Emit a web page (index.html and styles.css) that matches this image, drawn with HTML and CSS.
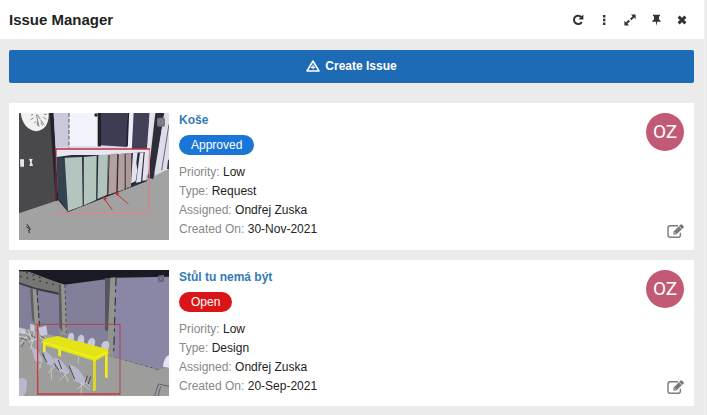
FILE: index.html
```
<!DOCTYPE html>
<html lang="en">
  <head>
    <meta charset="UTF-8" />
    <meta name="viewport" content="width=device-width, initial-scale=1.0" />
    <title>Issue Manager</title>
    <link rel="stylesheet" href="styles.css">
  </head>

  <body>
    <div class="panel">
      <header class="panel-header">
        <h1>Issue Manager</h1>
        <div class="tools">
          <button type="button" aria-label="Refresh">
            <svg viewBox="0 0 12 12"><path d="M9.6 3.4A4.2 4.2 0 1 0 9.8 8" fill="none" stroke="#333" stroke-width="2" /><path d="M11.4.6v5H6.4z" /></svg>
          </button>
          <button type="button" aria-label="More">
            <svg viewBox="0 0 12 12"><path d="M5 1h2.4v2.4H5zM5 4.8h2.4v2.4H5zM5 8.6h2.4V11H5z" /></svg>
          </button>
          <button type="button" aria-label="Expand">
            <svg viewBox="0 0 12 12"><path d="M7 .6h4.6v4.6L10 3.6 7.4 6.2 6 4.8l2.6-2.6zM5 11.4H.4V6.8L2 8.4l2.6-2.6L6 7.2 3.4 9.8z" /></svg>
          </button>
          <button type="button" aria-label="Pin">
            <svg viewBox="0 0 12 12"><path d="M3 .8h7v1.4H9v3.2q1.8.6 1.8 2.4H7.2L6.5 12l-.7-4.2H2.2q0-1.8 1.8-2.4V2.2H3z" /></svg>
          </button>
          <button type="button" aria-label="Close">
            <svg viewBox="0 0 12 12"><path d="M2.6 2.6l6.8 6.8M9.4 2.6L2.6 9.4" stroke="#333" stroke-width="2.9" /></svg>
          </button>
        </div>
      </header>

      <main class="content">
        <button type="button" class="create">
          <svg viewBox="0 0 14 12"><path d="M7 1L13 11H1z" fill="none" stroke="#fff" stroke-width="1.5" stroke-linejoin="round" /><path d="M7 4.8v4.4M4.8 7.4h4.4" stroke="#fff" stroke-width="1.1" /></svg>
          Create Issue
        </button>

        <article class="card">
          <svg class="thumb" viewBox="0 0 450 381" role="img" aria-label="Koše">
            <rect width="450" height="381" fill="#a2a2a2" />
            <path d="M90 0h360v168L110 262z" fill="#d9d8e4" />
            <path d="M0 0h96l20 262L0 301z" fill="#49494b" />
            <path d="M92 0h12l14 262-8 2z" fill="#25222b" />
            <path d="M104 0h46v102h-40z" fill="#c9c8dc" />
            <path d="M150 0h88v100h-88z" fill="#f3f3fc" />
            <path d="M150 0v104" stroke="#555361" stroke-width="3" stroke-dasharray="12 5" />
            <path d="M236 0h10v100h-10z" fill="#202028" />
            <circle cx="231" cy="6" r="5" fill="#222" />
            <path d="M246 0h80v102l-80-5z" fill="#3d3c52" />
            <path d="M328 0h16l-6 118h-14z" fill="#ededf8" />
            <path d="M328 0l-4 100" stroke="#20202a" stroke-width="5" />
            <path d="M344 0h48l-6 116h-48z" fill="#424158" />
            <path d="M392 0h17l-19 118h-7z" fill="#e3e3ee" />
            <path d="M409 0h27l-33 198-16-3z" fill="#2e2c38" />
            <path d="M436 0h14v167l-43 21z" fill="#dddde9" />
            <path d="M450 34l-22 138" stroke="#676577" stroke-width="3" />
            <path d="M447 140h3v28h-6z" fill="#39374a" />
            <!-- wall clock and sockets -->
            <path d="M5 0h84q2 48-36 55Q12 50 5 0z" fill="#f1f1f1" />
            <path d="M54 4l10 15M52 5l8 36M42 4l-6 3M44 15l-9 5M50 25l-5 6M55 26v12M65 21l10 14M73 12l9 7M75 4h8M66 28l5 10" stroke="#555" stroke-width="2" fill="none" />
            <path d="M3 139h12v22H4zM30 137l11 1-3 8 4 13H31l3-10z" fill="#e6e6e6" />
            <!-- cabinets -->
            <path d="M111 108h282v18l-282 12z" fill="#e8e7ef" />
            <path d="M113 132l45-6h110l110-9 5 88-236 92-30-36z" fill="#292d38" />
            <path d="M113 132l24 5 10 158-29-39z" fill="#34414f" />
            <path d="M137 134l52-2 3 147-45 16z" fill="#b4c5bf" />
            <path d="M194 132l40-4-2 132-38 18z" fill="#b2c5be" />
            <path d="M238 127l32-3-5 121-30 13z" fill="#b0c3bc" />
            <path d="M272 124l24-3-3 115-25 9z" fill="#b5a09f" />
            <path d="M299 123l18-2v109l-21 7z" fill="#b39f9e" />
            <path d="M320 122l17-3-1 103-16 6z" fill="#ae9998" />
            <path d="M342 120l14-2-4 31 3 22-5 34-14 6zM363 119l11-1-8 88-15 3zM377 118h9l-3 84-13 1z" fill="#e2e2f1" />
            <path d="M192 133v147M234 129l-1 133M268 126l-3 120M296 123l-3 115" stroke="#202b33" stroke-width="2" />
            <path d="M148 296l240-96" stroke="#333" stroke-width="2" stroke-dasharray="5 5" />
            <!-- markup -->
            <path d="M109 300h282V108" fill="none" stroke="#eb7c7e" stroke-width="3" />
            <path d="M111 108v150" stroke="#8d2540" stroke-width="3" />
            <path d="M109 108h284" stroke="#c32f4a" stroke-width="5" />
            <path d="M280 291l-26-37M328 273l-37-32" stroke="#c33439" stroke-width="3" />
            <path d="M251 250l13 6-8 7zM287 237l14 3-6 9z" fill="#c92f35" />
            <path d="M24 334l10 15-5 2 2 9M22 342l6 4" stroke="#202020" stroke-width="3" fill="none" />
            <rect x="414" y="14" width="24" height="27" rx="5" fill="#77757e" />
            <circle cx="426" cy="26" r="6" fill="none" stroke="#8c8c92" stroke-width="3" />
          </svg>
          <div class="details">
            <h2><a href="#">Koše</a></h2>
            <span class="status approved">Approved</span>
            <dl>
              <div><dt>Priority:</dt> <dd>Low</dd></div>
              <div><dt>Type:</dt> <dd>Request</dd></div>
              <div><dt>Assigned:</dt> <dd>Ondřej Zuska</dd></div>
              <div><dt>Created On:</dt> <dd>30-Nov-2021</dd></div>
            </dl>
          </div>
          <div class="side">
            <span class="avatar">OZ</span>
            <button type="button" class="edit" aria-label="Edit Koše">
              <svg viewBox="0 0 17 14"><path d="M11 1.8H3.2Q1 1.8 1 4v7q0 2.2 2.2 2.2h8q2.2 0 2.2-2.2V8.8" fill="none" stroke="#7b7b80" stroke-width="1.4" /><path d="M6.4 10.6V7.8L13.6.6q.6-.5 1.2 0l1.8 1.7q.5.6 0 1.2l-7.2 7.1z" fill="#77777c" /><path d="M7.4 8.2l1.5 1.5M12.3 2.5l2.3 2.3" stroke="#fff" stroke-width=".8" /></svg>
            </button>
          </div>
        </article>

        <article class="card">
          <svg class="thumb" viewBox="0 0 450 378" role="img" aria-label="Stůl tu nemá být">
            <rect width="450" height="378" fill="#9d9d9a" />
            <path d="M0 40l140 5 150-25h160v278l-30 2-140-40L0 172z" fill="#817f99" />
            <path d="M292 20h158v278l-30 2-145-42z" fill="#8987a5" />
            <path d="M0 0h450v20l-158 3-154 21L0 5z" fill="#1a1a24" />
            <path d="M0 4l30 1 92 35 16 5v28l-20-3-68-16L0 38z" fill="#777674" />
            <path d="M3 19l58 14 60 14M22 8l56 20" stroke="#333" stroke-width="4" stroke-dasharray="5 15" fill="none" />
            <path d="M0 37l50 16 72 15v7l-72-16L0 42z" fill="#3c3b42" />
            <path d="M33 55l19 3 12 119H44z" fill="#96958f" />
            <path d="M33 55l8 1 6 110-8-20z" fill="#5f5e63" />
            <path d="M54 60l8 115" stroke="#292936" stroke-width="3" stroke-dasharray="16 7" />
            <path d="M119 42l18 3 8 150h-22z" fill="#94938e" />
            <path d="M119 42l7 2 4 143-9-17z" fill="#5b5a61" />
            <path d="M138 45l4 145" stroke="#2c2c37" stroke-width="2" stroke-dasharray="9 8" />
            <path d="M258 24h20v162l-20-5z" fill="#55545f" />
            <path d="M274 23l17-1-9 238-18-6z" fill="#94938d" />
            <path d="M291 23l-7 227" stroke="#262631" stroke-width="3" stroke-dasharray="25 10 9 15" />
            <path d="M270 258l150 42" stroke="#484854" stroke-width="3" stroke-dasharray="9 7" />
            <path d="M0 172l60 14 58 14 155 58 144 42 33-10v88H0z" fill="#9d9e9b" />
            <path d="M432 290q2-28 18-36v39z" fill="#e4e4f2" />
            <path d="M418 342l32 7M418 342l-11 36M425 349l-8 29" fill="none" stroke="#626272" stroke-width="3" />
            <!-- far chairs -->
            <g fill="#c8c8dc" stroke="#dcdcea" stroke-width="1">
              <path d="M147 209q-1-22 12-20 8 2 5 21zM176 215q0-21 13-20 9 3 5 24zM206 222q3-19 16-17 10 4 3 26zM247 232q2-21 17-18 10 3 3 25z" />
              <path d="M2 174l18 5-3 12-17-3zM34 162l11 4 2 19-13-4zM58 175l23-8 4 26-20 6z" />
            </g>
            <path d="M0 199l30 5M3 223l20-24M28 178l11 35M8 183l27 14M35 237l12-51M60 197l20 20M29 216l24-9M67 220l13-19M153 212l-3 19M184 219l5 20" stroke="#e6e6f3" stroke-width="2" />
            <path d="M5 204l17 6M25 200l9 6M36 195l12 8M8 231l6-13M64 197l20 13" stroke="#43434f" stroke-width="2" />
            <!-- table -->
            <path d="M72 207l45-9 149 40 3 12-41 24-153-49z" fill="#e4e315" />
            <path d="M76 217l151 47 39-19" fill="none" stroke="#f2f027" stroke-width="4" />
            <path d="M76 216v30M122 237v22M226 268v94M262 246v77" stroke="#f0ee17" stroke-width="8" />
            <path d="M225 274v86" stroke="#b9b810" stroke-width="2" />
            <!-- near chairs -->
            <g fill="#b7b7ce" stroke="#cfcfe0" stroke-width="1">
              <path d="M37 230l17 11 15 23 1 12-21-5zM76 242l18 14 12 18v15l-23-8zM105 263q24 6 33 25l12 15-4 8-28-8zM150 284q29 7 39 32l14 16-6 10-31-9z" />
              <path d="M0 328q17-8 23 5l-3 33-9 12H0z" />
            </g>
            <path d="M52 272l15 21M68 277l-12 26M96 289l2 39M106 290l-18 19M136 307l12 29M146 307l-25 25M181 336l32 23M204 334l-29 23M187 338v39M199 335l15 16M179 261l-2 18" stroke="#d6d6e2" stroke-width="2" />
            <path d="M70 250l14 28M105 280l15 21M150 286l17 42M205 317l-6 21M208 342l7-22M118 270l10 27" stroke="#44444e" stroke-width="3" />
            <!-- markup -->
            <path d="M50 163h254M303 163v211" fill="none" stroke="#b53d50" stroke-width="3" />
            <path d="M56 163v209h247" fill="none" stroke="#d43442" stroke-width="4" />
            <path d="M417 17l18-3v21l-18 2z" fill="#65647a" />
            <path d="M420 20l12 12M432 19l-12 14" stroke="#92919d" stroke-width="2" />
          </svg>
          <div class="details">
            <h2><a href="#">Stůl tu nemá být</a></h2>
            <span class="status open">Open</span>
            <dl>
              <div><dt>Priority:</dt> <dd>Low</dd></div>
              <div><dt>Type:</dt> <dd>Design</dd></div>
              <div><dt>Assigned:</dt> <dd>Ondřej Zuska</dd></div>
              <div><dt>Created On:</dt> <dd>20-Sep-2021</dd></div>
            </dl>
          </div>
          <div class="side">
            <span class="avatar">OZ</span>
            <button type="button" class="edit" aria-label="Edit Stůl tu nemá být">
              <svg viewBox="0 0 17 14"><path d="M11 1.8H3.2Q1 1.8 1 4v7q0 2.2 2.2 2.2h8q2.2 0 2.2-2.2V8.8" fill="none" stroke="#7b7b80" stroke-width="1.4" /><path d="M6.4 10.6V7.8L13.6.6q.6-.5 1.2 0l1.8 1.7q.5.6 0 1.2l-7.2 7.1z" fill="#77777c" /><path d="M7.4 8.2l1.5 1.5M12.3 2.5l2.3 2.3" stroke="#fff" stroke-width=".8" /></svg>
            </button>
          </div>
        </article>
      </main>
    </div>
  </body>
</html>
```

FILE: styles.css
```
* {
  box-sizing: border-box;
}

body {
  margin: 0;
  background: #ebebeb;
  font-family: "Liberation Sans", Arial, sans-serif;
  font-size: 12px;
  color: #222;
}

h1,
h2,
dl,
dd {
  margin: 0;
}

button {
  border: none;
  padding: 0;
  background: none;
  font: inherit;
  cursor: pointer;
}

svg {
  display: block;
}

.panel {
  min-height: 100vh;
  margin-right: 2px;
  border-right: 1px solid #f2f2f2;
}

.panel-header {
  display: flex;
  align-items: center;
  justify-content: space-between;
  height: 39px;
  padding: 0 16px 0 9px;
  background: #fff;
}

.panel-header h1 {
  font-size: 15px;
}

.tools {
  display: flex;
  gap: 14px;
}

.tools svg {
  width: 12px;
  height: 12px;
  fill: #333;
}

.content {
  padding: 11px 10px 9px 9px;
}

.create {
  display: flex;
  align-items: center;
  justify-content: center;
  gap: 5px;
  width: 100%;
  height: 33px;
  margin-bottom: 20px;
  padding-bottom: 2px;
  border-radius: 2px;
  background: #1d6bb5;
  color: #fff;
  font-weight: bold;
}

.create svg {
  width: 14px;
  height: 12px;
}

.card {
  display: flex;
  gap: 10px;
  padding: 10px;
  background: #fff;
}

.card + .card {
  margin-top: 10px;
}

.thumb {
  flex: none;
  align-self: flex-start;
  width: 150px;
  height: auto;
}

.details {
  flex: 1;
}

.details h2 {
  font-size: 12px;
  line-height: 14px;
}

.details a {
  color: #337ab7;
  text-decoration: none;
}

.status {
  display: inline-block;
  margin: 8px 0;
  padding: 0 12px;
  border-radius: 10px;
  line-height: 20px;
  color: #fff;
  vertical-align: top;
}

.approved {
  background: #1976d6;
}

.open {
  background: #d91517;
}

.details dl {
  line-height: 19px;
}

.details dt,
.details dd {
  display: inline;
}

.details dt {
  color: #888;
}

.side {
  display: flex;
  flex-direction: column;
  align-items: flex-end;
  justify-content: space-between;
  padding-bottom: 2px;
}

.avatar {
  width: 38px;
  border-radius: 50%;
  background: #c25975;
  color: #fff;
  font-family: Roboto, sans-serif;
  font-size: 19px;
  line-height: 38px;
  text-align: center;
}

.edit svg {
  width: 17px;
  height: 14px;
}
```
